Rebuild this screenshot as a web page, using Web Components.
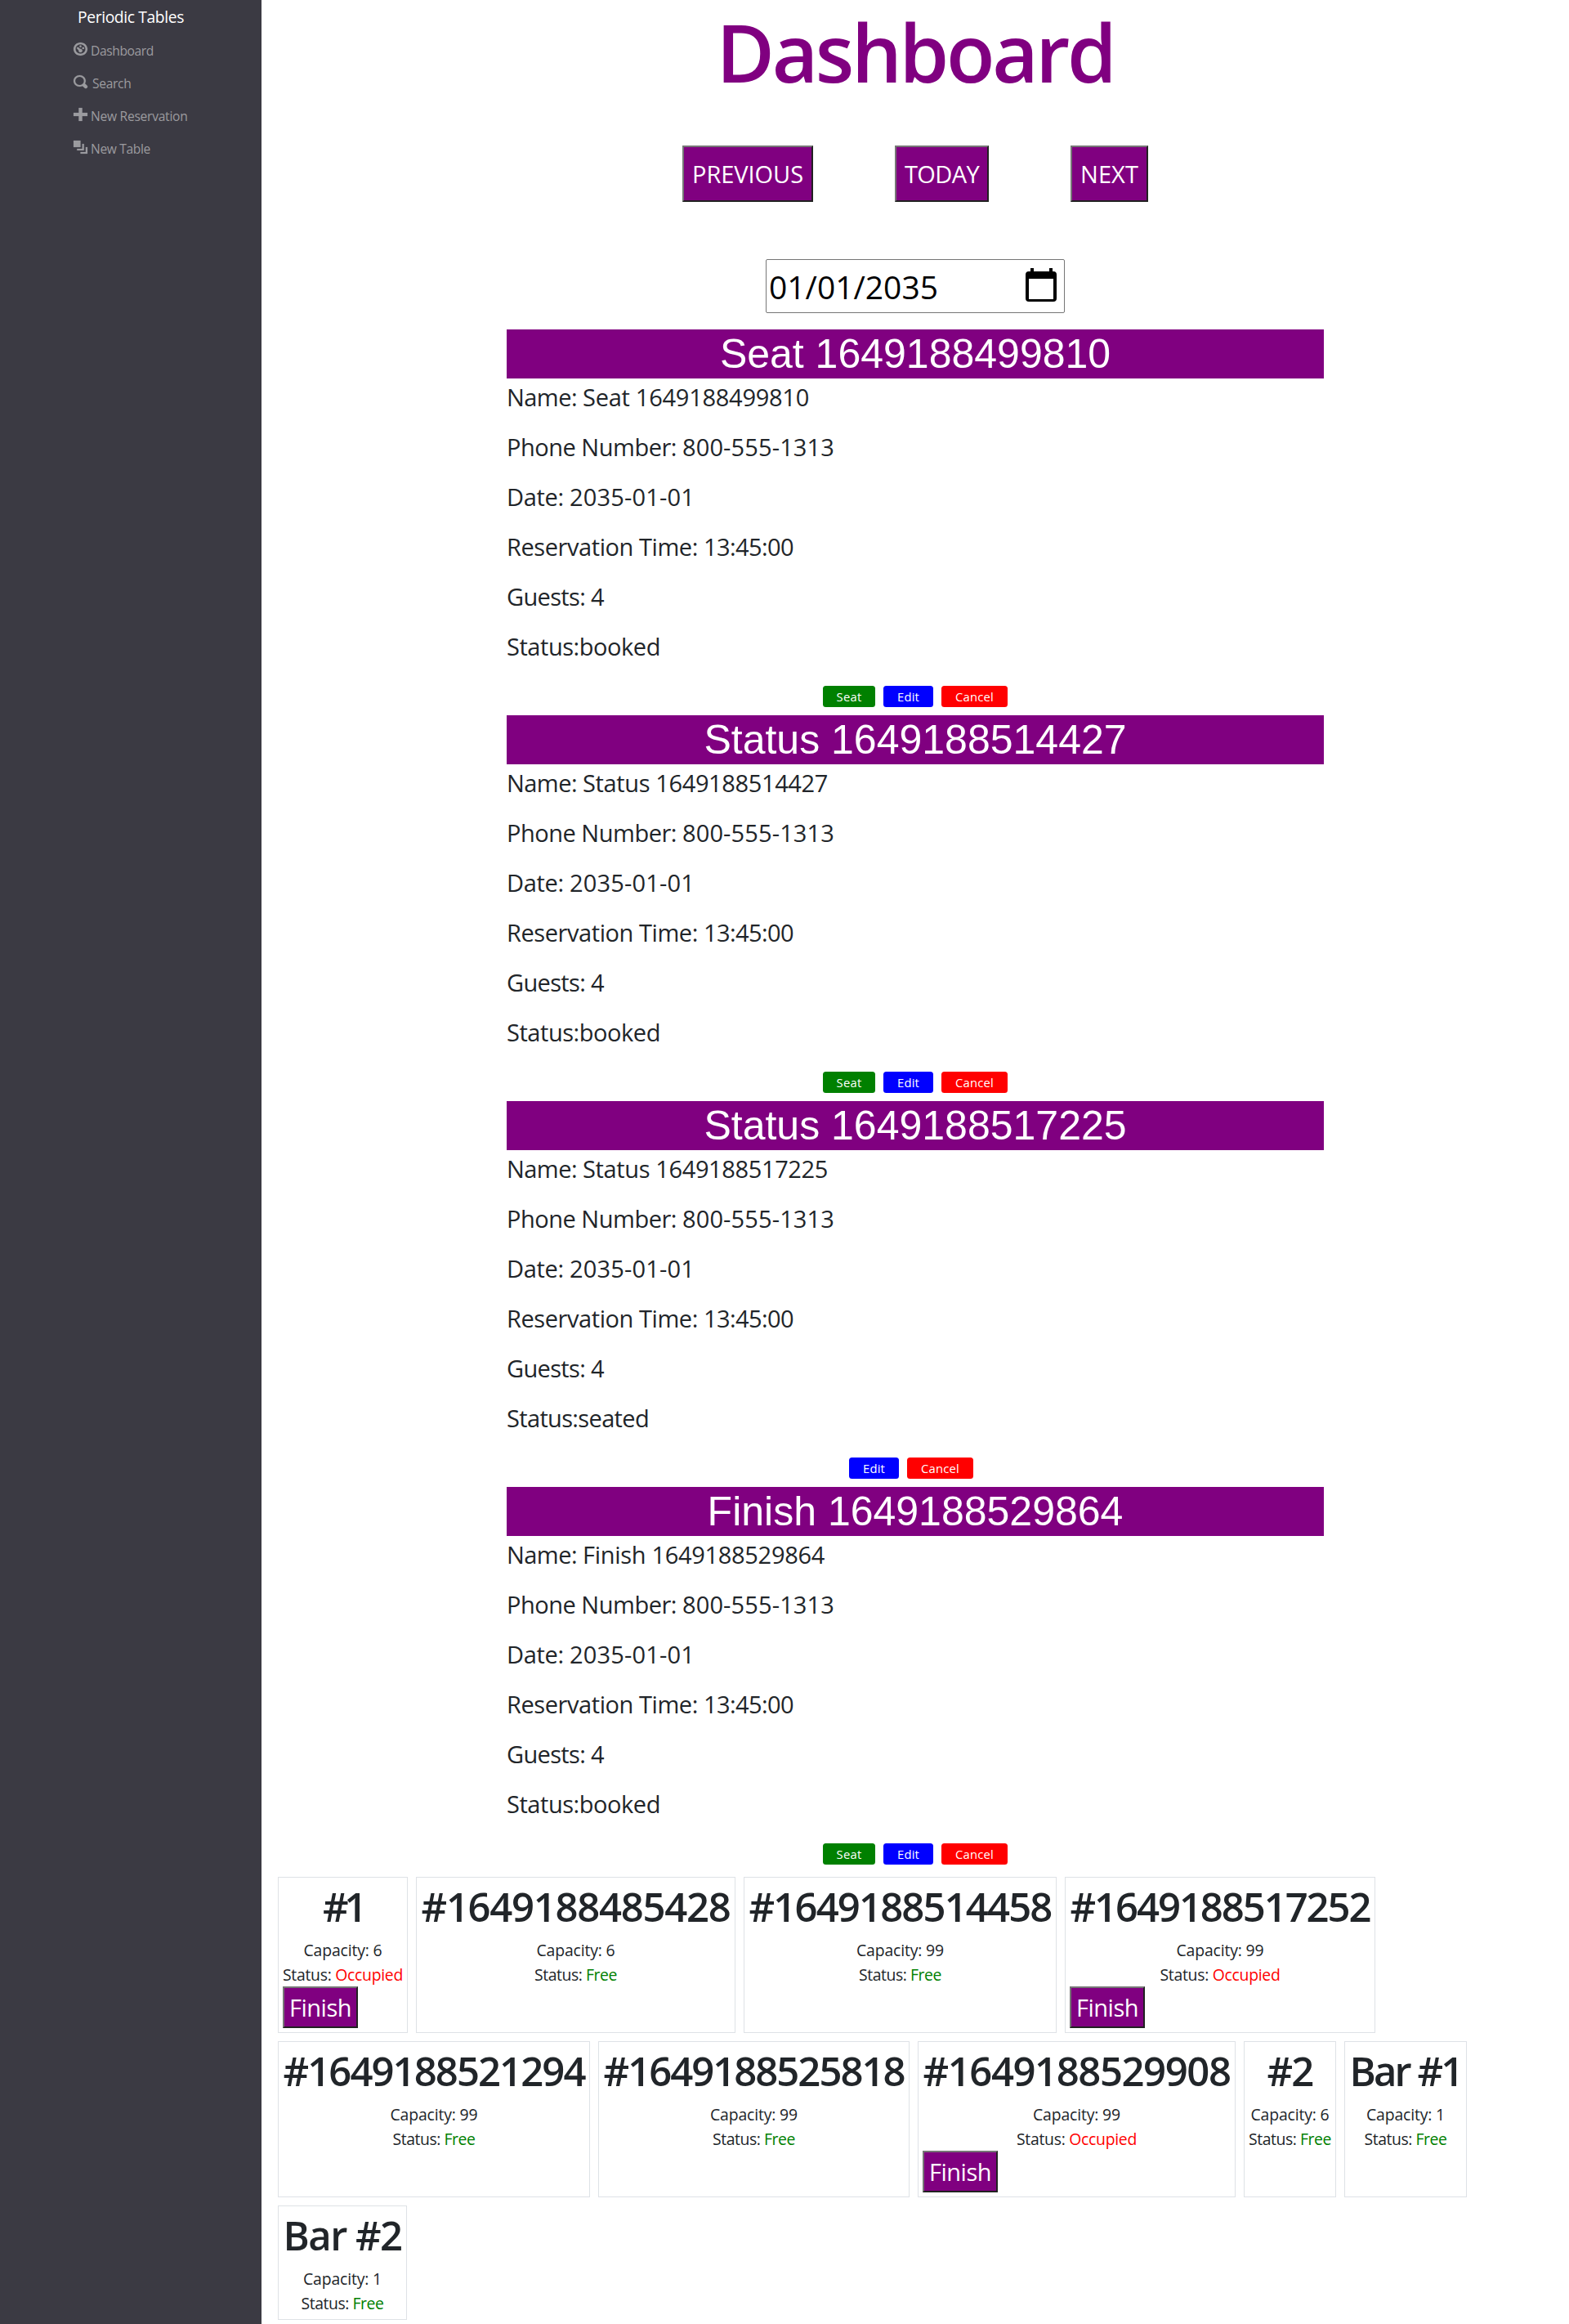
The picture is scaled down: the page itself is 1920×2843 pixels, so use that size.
<!DOCTYPE html>
<html lang="en">
<head>
<meta charset="utf-8">
<title>Periodic Tables</title>
<style>
body{margin:0;background:#fff;color:#212529;font-family:"Open Sans","Noto Sans",sans-serif}
</style>
</head>
<body>
<periodic-app></periodic-app>
<script>
const define = (name, render) => customElements.define(name, class extends HTMLElement {
  connectedCallback() {
    if (!this.shadowRoot) this.attachShadow({ mode: 'open' }).innerHTML = render(this);
  }
});

const icons = {
  dashboard: 'M4 0c-2.2 0-4 1.8-4 4s1.8 4 4 4 4-1.8 4-4-1.8-4-4-4zm0 1.15c1.57 0 2.85 1.28 2.85 2.85s-1.28 2.85-2.85 2.85-2.85-1.28-2.85-2.85 1.28-2.85 2.85-2.85zm0 .65c-.33 0-.6.27-.6.6s.27.6.6.6.6-.27.6-.6-.27-.6-.6-.6zm-1.7 1.05a.6.6 0 0 0-.2 1l.85.85c-.02.08-.06.16-.06.25 0 .6.5 1.1 1.1 1.1s1.1-.5 1.1-1.1-.5-1.1-1.1-1.1c-.09 0-.17.04-.25.06l-.85-.85a.6.6 0 0 0-.59-.21zm3.25 0c-.33 0-.6.27-.6.6s.27.6.6.6.6-.27.6-.6-.27-.6-.6-.6z',
  search: 'M3.5 0c-1.93 0-3.5 1.57-3.5 3.5s1.57 3.5 3.5 3.5c.59 0 1.17-.14 1.66-.41a1 1 0 0 0 .13.13l1 1a1.02 1.02 0 1 0 1.44-1.44l-1-1a1 1 0 0 0-.16-.13c.27-.49.44-1.06.44-1.66 0-1.93-1.55-3.5-3.5-3.5zm0 1c1.39 0 2.5 1.11 2.5 2.5 0 .66-.24 1.27-.66 1.72l-.16.16c-.44.4-1.04.63-1.69.63-1.39 0-2.5-1.11-2.5-2.5s1.11-2.5 2.5-2.5z',
  plus: 'M3 0v3h-3v2h3v3h2v-3h3v-2h-3v-3h-2z',
  layers: 'M0 0v4h4v-4h-4zm5 2v3h-3v1h4v-4h-1zm2 2v3h-3v1h4v-4h-1z'
};

define('nav-item', el => `
<style>
:host{display:flex;height:40px;align-items:flex-start;color:#9b9b9f;font-size:15.6px;line-height:24px}
svg{width:17px;height:16px;fill:currentColor;stroke:currentColor;stroke-width:.1;overflow:visible;margin:2px ${el.getAttribute('gap')}px 0 0}
</style>
<svg viewBox="0 0 8 8" preserveAspectRatio="none"><path d="${icons[el.getAttribute('icon')]}"/></svg><slot></slot>`);

define('side-bar', () => `
<style>
:host{display:block;width:320px;flex:none;background:#3b3a43;box-sizing:border-box;padding:6px 0 0 90px}
.brand{color:#fff;font-size:19.3px;line-height:30px;height:44px;padding-left:5px}
</style>
<div class="brand"><fit-text w="130">Periodic Tables</fit-text></div>
<nav>
<nav-item icon="dashboard" gap="4"><fit-text w="77">Dashboard</fit-text></nav-item>
<nav-item icon="search" gap="6"><fit-text w="47.5">Search</fit-text></nav-item>
<nav-item icon="plus" gap="4"><fit-text w="118.5">New Reservation</fit-text></nav-item>
<nav-item icon="layers" gap="4"><fit-text w="73">New Table</fit-text></nav-item>
</nav>`);

define('action-button', el => `
<style>
:host{display:block;width:max-content}
button{display:block;margin:0;background:purple;color:#fff;border:2px solid;border-color:#767676 #212121 #212121 #767676;border-radius:0;font:29px/45px "Open Sans","Noto Sans",sans-serif;padding:${el.getAttribute('pad')}}
</style>
<button><slot></slot></button>`);

define('date-field', () => `
<style>
:host{display:flex;box-sizing:border-box;width:366px;height:66px;border:1px solid #767676;border-radius:2px;padding:0 8px 0 3px;align-items:center;justify-content:space-between;color:#000;font-size:39px;line-height:60px}
span{padding-top:2px}
svg{width:40px;height:42px;margin-bottom:2px}
</style>
<span><fit-text w="207">01/01/2035</fit-text></span>
<svg viewBox="0 0 40 42"><path fill-rule="evenodd" d="M7 0h4v4h19V0h4v4h1a4 4 0 0 1 4 4v29a4 4 0 0 1-4 4H5a4 4 0 0 1-4-4V8a4 4 0 0 1 4-4h2zM5 13v25h30V13z"/></svg>`);

define('pill-button', el => `
<style>
:host{display:flex;height:26px;border-radius:3.5px;color:#fff;font-size:14.8px;line-height:26px;justify-content:center;width:${el.getAttribute('width')}px;background:${el.getAttribute('color')}}
</style>
<slot></slot>`);

define('reservation-card', el => {
  const a = n => el.getAttribute(n);
  const booked = a('status') === 'booked';
  return `
<style>
:host{display:block;width:1000px;height:472px}
h2{margin:0;background:purple;color:#fff;text-align:center;font:400 50px/60px "Liberation Sans",Arial,sans-serif}
p{margin:0 0 16px;font-size:29px;line-height:45px}
.actions{display:flex;justify-content:center;gap:10px;padding:10px ${booked ? 0 : 10}px 0 0}
</style>
<h2>${a('name')}</h2>
<p><fit-text w="93">Name: </fit-text><fit-text w="${a('name-width') - 94}">${a('name')}</fit-text></p>
<p><fit-text w="215">Phone Number: </fit-text><fit-text w="186">800-555-1313</fit-text></p>
<p><fit-text w="77">Date: </fit-text><fit-text w="153">2035-01-01</fit-text></p>
<p><fit-text w="241">Reservation Time: </fit-text><fit-text w="110">13:45:00</fit-text></p>
<p><fit-text w="119">Guests: 4</fit-text></p>
<p><fit-text w="${booked ? 188 : 174}">Status:${a('status')}</fit-text></p>
<div class="actions">
${booked ? '<pill-button color="green" width="64"><fit-text w="31">Seat</fit-text></pill-button>' : ''}
<pill-button color="blue" width="61"><fit-text w="27">Edit</fit-text></pill-button>
<pill-button color="red" width="81"><fit-text w="47">Cancel</fit-text></pill-button>
</div>`;
});

define('table-card', el => {
  const a = n => el.getAttribute(n);
  const busy = el.hasAttribute('occupied');
  return `
<style>
:host{display:block;box-sizing:border-box;width:${a('width')}px;border:1px solid #dee2e6;padding:5px;text-align:center}
h2{margin:0 0 9px;font-weight:600;font-size:49px;line-height:60px}
p{margin:0;font-size:19.4px;line-height:30px}
p:last-of-type{margin-bottom:-1px}
.Free{color:green}.Occupied{color:red}
</style>
<h2><fit-text w="${a('title') - 1}">${a('name')}</fit-text></h2>
<p><fit-text w="${+a('capacity') > 9 ? 107 : 96}">Capacity: ${a('capacity')}</fit-text></p>
<p><fit-text w="${busy ? 147 : 101}">Status: <span class="${busy ? 'Occupied' : 'Free'}">${busy ? 'Occupied' : 'Free'}</span></fit-text></p>
${busy ? '<action-button pad="1px 6px"><fit-text w="76">Finish</fit-text></action-button>' : ''}`;
});

define('periodic-app', () => `
<style>
:host{display:flex;height:2843px}
main{width:1600px;display:flex;flex-direction:column;align-items:center}
h1{margin:0;color:purple;font-weight:600;font-size:97.5px;line-height:120px;padding-top:4px;height:174px;box-sizing:content-box}
.nav{display:flex;gap:100px;height:139px}
date-field{margin-bottom:20px}
.tables{display:flex;flex-wrap:wrap;gap:10px;width:1520px;align-self:flex-start;margin:5px 0 0 20px}
</style>
<side-bar></side-bar>
<main>
<h1><fit-text w="487">Dashboard</fit-text></h1>
<div class="nav">
<action-button pad="10px"><fit-text w="136">PREVIOUS</fit-text></action-button>
<action-button pad="10px"><fit-text w="91">TODAY</fit-text></action-button>
<action-button pad="10px"><fit-text w="71">NEXT</fit-text></action-button>
</div>
<date-field></date-field>
<reservation-card name="Seat 1649188499810" name-width="371" status="booked"></reservation-card>
<reservation-card name="Status 1649188514427" name-width="394" status="booked"></reservation-card>
<reservation-card name="Status 1649188517225" name-width="394" status="seated"></reservation-card>
<reservation-card name="Finish 1649188529864" name-width="390" status="booked"></reservation-card>
<div class="tables">
<table-card name="#1" title="50" capacity="6" width="159" occupied></table-card>
<table-card name="#1649188485428" title="379" capacity="6" width="391"></table-card>
<table-card name="#1649188514458" title="371" capacity="99" width="383"></table-card>
<table-card name="#1649188517252" title="368" capacity="99" width="380" occupied></table-card>
<table-card name="#1649188521294" title="370" capacity="99" width="382"></table-card>
<table-card name="#1649188525818" title="369" capacity="99" width="381"></table-card>
<table-card name="#1649188529908" title="377" capacity="99" width="389" occupied></table-card>
<table-card name="#2" title="57" capacity="6" width="113"></table-card>
<table-card name="Bar #1" title="138" capacity="1" width="150"></table-card>
<table-card name="Bar #2" title="146" capacity="1" width="158"></table-card>
</div>
</main>`);

/* Tracks its text so that the line takes exactly w pixels. */
customElements.define('fit-text', class extends HTMLElement {
  connectedCallback() {
    if (this.shadowRoot) return;
    this.attachShadow({ mode: 'open' }).innerHTML =
      '<style>:host{display:inline-block;white-space:pre}</style><slot></slot>';
    const natural = this.getBoundingClientRect().width;
    this.style.letterSpacing = (this.getAttribute('w') - natural) / this.textContent.length + 'px';
  }
});
</script>
</body>
</html>
